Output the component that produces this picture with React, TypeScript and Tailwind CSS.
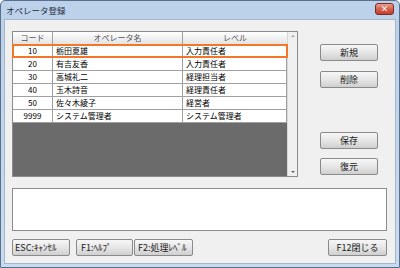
import React from 'react'

const font = { fontFamily: '"Noto Sans CJK JP", "Noto Sans", sans-serif' }

const rows = [
  { code: '10', name: '栃田夏雄', level: '入力責任者' },
  { code: '20', name: '有吉友香', level: '入力責任者' },
  { code: '30', name: '高城礼二', level: '経理担当者' },
  { code: '40', name: '玉木詩音', level: '経理責任者' },
  { code: '50', name: '佐々木綾子', level: '経営者' },
  { code: '9999', name: 'システム管理者', level: 'システム管理者' },
]

function WinButton({ label, className = '' }: { label: string; className?: string }) {
  return (
    <div
      className={`h-[17px] flex items-center rounded-[2px] border border-[#8a8a8a] bg-gradient-to-b from-[#f7f7f7] via-[#e6e6e6] to-[#cfcfcf] text-[#1a1a1a] leading-none ${className}`}
    >
      {label}
    </div>
  )
}

function OperatorTable() {
  return (
    <div className="w-[286px] h-[146px] border border-[#8c8c8c] bg-[#6b6b6b] flex">
      <div className="w-[274px] flex flex-col">
        {/* header */}
        <div className="h-[13px] flex bg-gradient-to-b from-[#ffffff] to-[#e4e4e4] border-b border-[#a0a0a0] text-[8px] text-[#555] leading-none">
          <div className="w-[40px] flex items-center justify-center border-r border-[#a0a0a0]">コード</div>
          <div className="w-[130px] flex items-center justify-center border-r border-[#a0a0a0]">オペレータ名</div>
          <div className="flex-1 flex items-center justify-center">レベル</div>
        </div>
        {/* rows */}
        {rows.map((r, i) => (
          <div
            key={r.code}
            className="relative h-[13px] flex bg-white text-[8px] text-black leading-none border-b border-[#a0a0a0]"
          >
            <div className="w-[40px] flex items-center justify-center border-r border-[#a0a0a0]">{r.code}</div>
            <div className="w-[130px] flex items-center pl-[3px] border-r border-[#a0a0a0]">{r.name}</div>
            <div className="flex-1 flex items-center pl-[3px] border-r border-[#a0a0a0]">{r.level}</div>
            {i === 0 && (
              <div className="absolute -left-[1px] -right-[1px] -top-[1px] bottom-[-1px] border-2 border-[#f07828]" />
            )}
          </div>
        ))}
      </div>
      {/* scrollbar */}
      <div className="flex-1 bg-[#f0f0f0] border-l border-[#d8d8d8] flex flex-col items-center justify-between py-[3px]">
        <div className="w-0 h-0 border-l-[2px] border-r-[2px] border-b-[2px] border-l-transparent border-r-transparent border-b-[#a8a8a8]" />
        <div className="w-0 h-0 border-l-[2px] border-r-[2px] border-t-[2px] border-l-transparent border-r-transparent border-t-[#606060]" />
      </div>
    </div>
  )
}

export default function App() {
  return (
    <div
      className="w-[400px] h-[268px] flex flex-col bg-gradient-to-b from-[#bcd1ea] to-[#c9dbee] border border-[#5a6f8c] rounded-t-[5px]"
      style={font}
    >
      {/* title bar */}
      <div className="h-[18px] flex items-center justify-between pl-[5px] pr-[5px]">
        <span className="text-[8.5px] text-[#1e2a3a] leading-none">オペレータ登録</span>
        <div className="w-[19px] h-[12px] mt-[-2px] rounded-[3px] border border-[#7a2a20] bg-gradient-to-b from-[#e8a090] via-[#d5604d] to-[#c23e2c] flex items-center justify-center text-white text-[8px] font-bold leading-none">
          ×
        </div>
      </div>

      {/* client */}
      <div className="flex-1 mx-[3px] mb-[3px] bg-[#f0f0f0] border border-[#a4b6cc] flex flex-col pl-[7px] pt-[11px]">
        <div className="flex">
          <OperatorTable />
          <div className="ml-[22px] pt-[13px] flex flex-col w-[58px] text-[9px]">
            <WinButton label="新規" className="justify-center" />
            <WinButton label="削除" className="justify-center mt-[10px]" />
            <WinButton label="保存" className="justify-center mt-[44px]" />
            <WinButton label="復元" className="justify-center mt-[9px]" />
          </div>
        </div>

        <div className="mt-[11px] w-[375px] h-[43px] bg-white border border-[#8c8c8c]" />

        <div className="mt-[8px] w-[375px] flex text-[9px]">
          <WinButton label="ESC:ｷｬﾝｾﾙ" className="w-[58px] pl-[2px]" />
          <WinButton label="F1:ﾍﾙﾌﾟ" className="w-[57px] ml-[6px] pl-[4px]" />
          <WinButton label="F2:処理ﾚﾍﾞﾙ" className="w-[59px] ml-[1px] pl-[3px]" />
          <div className="flex-1" />
          <WinButton label="F12閉じる" className="w-[59px] justify-center" />
        </div>
      </div>
    </div>
  )
}
